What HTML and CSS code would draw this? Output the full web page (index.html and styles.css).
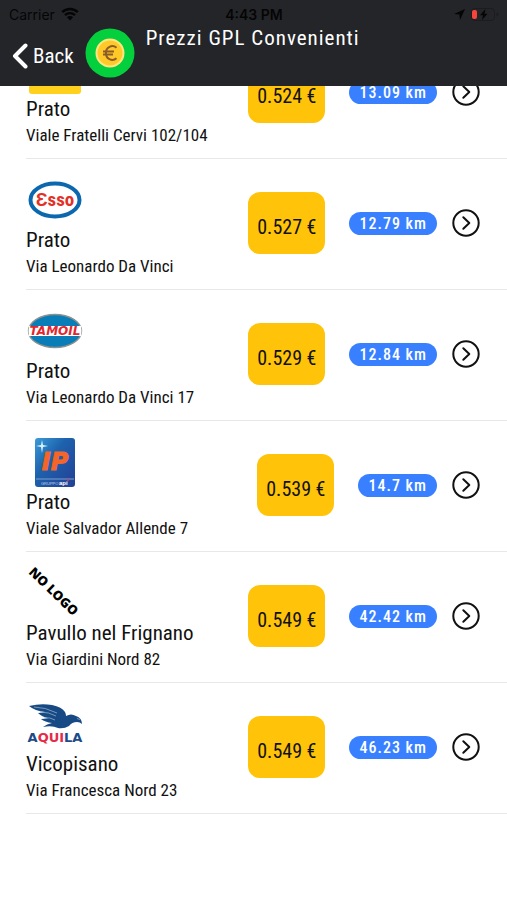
FILE: index.html
```html
<!DOCTYPE html>
<html lang="it">
  <head>
    <meta charset="UTF-8" />
    <meta name="viewport" content="width=device-width, initial-scale=1.0" />
    <title>Prezzi GPL Convenienti</title>
    <link rel="stylesheet" href="styles.css">
  </head>
  <body>
    <header class="header">
      <div class="status">
        <div class="status-left">
          <span>Carrier</span>
          <svg width="18" height="14" viewBox="0 0 18 14" fill="none" stroke="#050506" stroke-width="2.4">
            <path d="M1.2 5.2a11 11 0 0 1 15.6 0M4 8.2a7 7 0 0 1 10 0" />
            <path d="M9 13.5L5.9 10.3a4.4 4.4 0 0 1 6.2 0z" fill="#050506" stroke="none" />
          </svg>
        </div>
        <span class="time">4:43 PM</span>
        <div class="status-right">
          <svg width="11" height="11" viewBox="0 0 11 11"><path d="M11 0L6 11L5.4 5.6L0 5z" fill="#050506" /></svg>
          <svg width="28" height="13" viewBox="0 0 28 13">
            <rect x="0.5" y="0.5" width="23" height="12" rx="3.5" fill="none" stroke="#1c1c20" />
            <path d="M25.5 4.5v4q2-.5 2-2t-2-2" fill="#1c1c20" />
            <rect x="1" y="2" width="5" height="9" rx="2" fill="#f8453c" />
            <path d="M14.5 1L9 7.2h3L11 12l5.5-6.2h-3z" fill="#050506" />
          </svg>
        </div>
      </div>
      <nav class="nav">
        <button class="back" type="button">
          <svg width="16" height="26" viewBox="0 0 16 26"><path d="M13.5 2.5L3 13l10.5 10.5" fill="none" stroke="#fff" stroke-width="4" stroke-linecap="round" stroke-linejoin="round" /></svg>
          Back
        </button>
        <svg class="coin" width="50" height="50" viewBox="0 0 50 50">
          <circle cx="25" cy="25" r="24.5" fill="#04cf3c" />
          <circle cx="25" cy="25" r="14.5" fill="#ffe582" />
          <circle cx="25" cy="25" r="12.5" fill="#ffca28" />
          <path d="M31.5 19.8a6.300 6.300 0 0 0-10.500 5.200a6.300 6.300 0 0 0 10.500 5.200M18 23.500h11M18 26.500h10" fill="none" stroke="#8c5b2b" stroke-width="2" />
        </svg>
        <h1 class="title">Prezzi GPL Convenienti</h1>
      </nav>
    </header>

    <ul class="list">
      <li class="station">
        <div class="info">
          <svg class="logo" viewBox="0 0 58 56">
            <rect x="3" y="2" width="52" height="52" rx="3" fill="#ffd11c" />
          </svg>
          <h2 class="city">Prato</h2>
          <p class="address">Viale Fratelli Cervi 102/104</p>
        </div>
        <span class="price">0.524 €</span>
        <span class="distance">13.09 km</span>
        <button class="go" type="button" aria-label="Apri">
          <svg width="28" height="28" viewBox="0 0 28 28"><circle cx="14" cy="14" r="12.7" /><path d="M11.3 8.3l6 5.7l-6 5.7" /></svg>
        </button>
      </li>
      <li class="station">
        <div class="info">
          <svg class="logo" viewBox="0 0 58 56">
            <ellipse cx="29" cy="29" rx="24.5" ry="16.5" fill="#fff" stroke="#0b68ae" stroke-width="4" />
            <text class="esso" x="29" y="35" text-anchor="middle">Ɛsso</text>
          </svg>
          <h2 class="city">Prato</h2>
          <p class="address">Via Leonardo Da Vinci</p>
        </div>
        <span class="price">0.527 €</span>
        <span class="distance">12.79 km</span>
        <button class="go" type="button" aria-label="Apri">
          <svg width="28" height="28" viewBox="0 0 28 28"><circle cx="14" cy="14" r="12.7" /><path d="M11.3 8.3l6 5.7l-6 5.7" /></svg>
        </button>
      </li>
      <li class="station">
        <div class="info">
          <svg class="logo" viewBox="0 0 58 56">
            <ellipse cx="29" cy="29" rx="26.5" ry="16.5" fill="#087db8" stroke="#8b918f" stroke-width="1.4" />
            <path d="M3 24h52q1 5 0 10H3q-1-5 0-10z" fill="#fff" />
            <text class="tamoil" x="29" y="33" text-anchor="middle">TAMOIL</text>
          </svg>
          <h2 class="city">Prato</h2>
          <p class="address">Via Leonardo Da Vinci 17</p>
        </div>
        <span class="price">0.529 €</span>
        <span class="distance">12.84 km</span>
        <button class="go" type="button" aria-label="Apri">
          <svg width="28" height="28" viewBox="0 0 28 28"><circle cx="14" cy="14" r="12.7" /><path d="M11.3 8.3l6 5.7l-6 5.7" /></svg>
        </button>
      </li>
      <li class="station">
        <div class="info">
          <svg class="logo" viewBox="0 0 58 56">
            <defs>
              <linearGradient id="ip" x1="0" y1="0" x2="1" y2="1">
                <stop offset="0" stop-color="#3b9bd8" />
                <stop offset="0.4" stop-color="#1d62ad" />
                <stop offset="1" stop-color="#233f94" />
              </linearGradient>
            </defs>
            <rect x="9" y="5" width="40" height="49" rx="3" fill="url(#ip)" />
            <path d="M10 46h38" stroke="#7c9fd0" />
            <path d="M16 7l1 5l5 1l-5 1l-1 6l-1-6l-5-1l5-1z" fill="#d8f3ff" />
            <text class="ip" x="29" y="37" text-anchor="middle">IP</text>
            <text class="ip-small" x="15" y="52">GRUPPO</text>
            <text class="ip-api" x="33" y="52">api</text>
            <circle cx="42" cy="47" r="1" fill="#e8304a" />
          </svg>
          <h2 class="city">Prato</h2>
          <p class="address">Viale Salvador Allende 7</p>
        </div>
        <span class="price">0.539 €</span>
        <span class="distance">14.7 km</span>
        <button class="go" type="button" aria-label="Apri">
          <svg width="28" height="28" viewBox="0 0 28 28"><circle cx="14" cy="14" r="12.7" /><path d="M11.3 8.3l6 5.7l-6 5.7" /></svg>
        </button>
      </li>
      <li class="station">
        <div class="info">
          <svg class="logo" viewBox="0 0 58 56">
            <text class="no-logo" transform="translate(2 9) rotate(44)">NO LOGO</text>
          </svg>
          <h2 class="city">Pavullo nel Frignano</h2>
          <p class="address">Via Giardini Nord 82</p>
        </div>
        <span class="price">0.549 €</span>
        <span class="distance">42.42 km</span>
        <button class="go" type="button" aria-label="Apri">
          <svg width="28" height="28" viewBox="0 0 28 28"><circle cx="14" cy="14" r="12.7" /><path d="M11.3 8.3l6 5.7l-6 5.7" /></svg>
        </button>
      </li>
      <li class="station">
        <div class="info">
          <svg class="logo" viewBox="0 0 58 56">
            <path d="M3 11q12-3 23-1q10 2 13 7q1 2 1 4q5-3 10 0q6 2 6 8q-2-2-5-2q-5 0-8 4q-5 3-11 2q-6-3-15-1q4-3 9-4q-7-1-11-4q4 0 7-1q-6-1-10-5q4 0 7-1q-10-1-16-6z" fill="#174a84" />
            <path d="M8 12q11 0 23 6M14 17q9 0 16 4M18 23q6-1 11 2M51 23.500l3 1" fill="none" stroke="#8facc9" stroke-width="0.8" />
            <text class="aquila" x="29" y="47" text-anchor="middle">A<tspan class="red">QUI</tspan>LA</text>
          </svg>
          <h2 class="city">Vicopisano</h2>
          <p class="address">Via Francesca Nord 23</p>
        </div>
        <span class="price">0.549 €</span>
        <span class="distance">46.23 km</span>
        <button class="go" type="button" aria-label="Apri">
          <svg width="28" height="28" viewBox="0 0 28 28"><circle cx="14" cy="14" r="12.7" /><path d="M11.3 8.3l6 5.7l-6 5.7" /></svg>
        </button>
      </li>
    </ul>
  </body>
</html>
```
FILE: styles.css
```css
* {
  margin: 0;
  padding: 0;
  box-sizing: border-box;
}

body {
  min-height: 100vh;
  background-color: #fff;
  color: #111;
  font-family: "Roboto Condensed", "Liberation Sans Narrow", Roboto, sans-serif;
}

button {
  border: none;
  background: none;
  color: inherit;
  font-family: inherit;
  cursor: pointer;
}

/* the list scrolls underneath the header */
.header {
  position: fixed;
  top: 0;
  left: 0;
  right: 0;
  z-index: 1;
  height: 86px;
  background-color: #242529;
  color: #fff;
}

.status {
  display: grid;
  grid-template-columns: 1fr auto 1fr;
  align-items: center;
  height: 28px;
  padding: 0 8px 0 9px;
  color: #050506;
  font-family: Inter, sans-serif;
  font-size: 14px;
}

.status-left,
.status-right {
  display: flex;
  align-items: center;
  gap: 6px;
}

.status-right {
  justify-content: flex-end;
}

.time {
  font-weight: 600;
}

.nav {
  display: flex;
  align-items: flex-start;
  padding-left: 12px;
}

.back {
  display: flex;
  align-items: center;
  gap: 5px;
  height: 56px;
  font-size: 21px;
}

.coin {
  margin: 0 11px;
}

.title {
  font-size: 21px;
  font-weight: 400;
  line-height: 20px;
  letter-spacing: 1px;
}

.list {
  padding: 28px 0 0 26px;
  list-style: none;
}

.station {
  display: flex;
  align-items: center;
  padding: 8px 27px 10px 0;
  border-bottom: 1px solid #e8e8e8;
}

.info {
  flex: 1;
  padding-top: 4px;
}

.logo {
  display: block;
  width: 58px;
  height: 56px;
}

.city {
  font-size: 21px;
  font-weight: 400;
  line-height: 26px;
}

.address {
  font-size: 17px;
  line-height: 26px;
}

.price {
  height: 62px;
  padding: 8px 9px 0;
  border-radius: 12px;
  background-color: #ffc409;
  font-size: 20px;
  line-height: 54px;
}

.distance {
  margin: 0 15px 0 24px;
  padding: 0 10px;
  border-radius: 12px;
  background-color: #3880ff;
  color: #fff;
  font-size: 16px;
  font-weight: 500;
  line-height: 23px;
  letter-spacing: 1px;
}

.go {
  width: 28px;
  height: 28px;
}

.go svg {
  display: block;
  fill: none;
  stroke: #111;
  stroke-width: 2;
  stroke-linecap: round;
  stroke-linejoin: round;
}

.esso {
  fill: #e33126;
  font: 700 19px "Roboto Condensed", sans-serif;
}

.tamoil {
  fill: #e3262e;
  font: italic 700 12px "DejaVu Sans", sans-serif;
}

.ip {
  fill: #f4652a;
  stroke: #f4652a;
  font: italic 700 24px "DejaVu Sans", sans-serif;
}

.ip-small {
  fill: #c9d6ee;
  font: 4px "Liberation Sans", sans-serif;
}

.ip-api {
  fill: #fff;
  font: 700 6px "Liberation Sans", sans-serif;
}

.no-logo {
  fill: #000;
  font: 800 13px "Open Sans", sans-serif;
}

.aquila {
  fill: #1d4b87;
  font: 700 13px "DejaVu Sans", sans-serif;
}

.red {
  fill: #e42b48;
}
```
